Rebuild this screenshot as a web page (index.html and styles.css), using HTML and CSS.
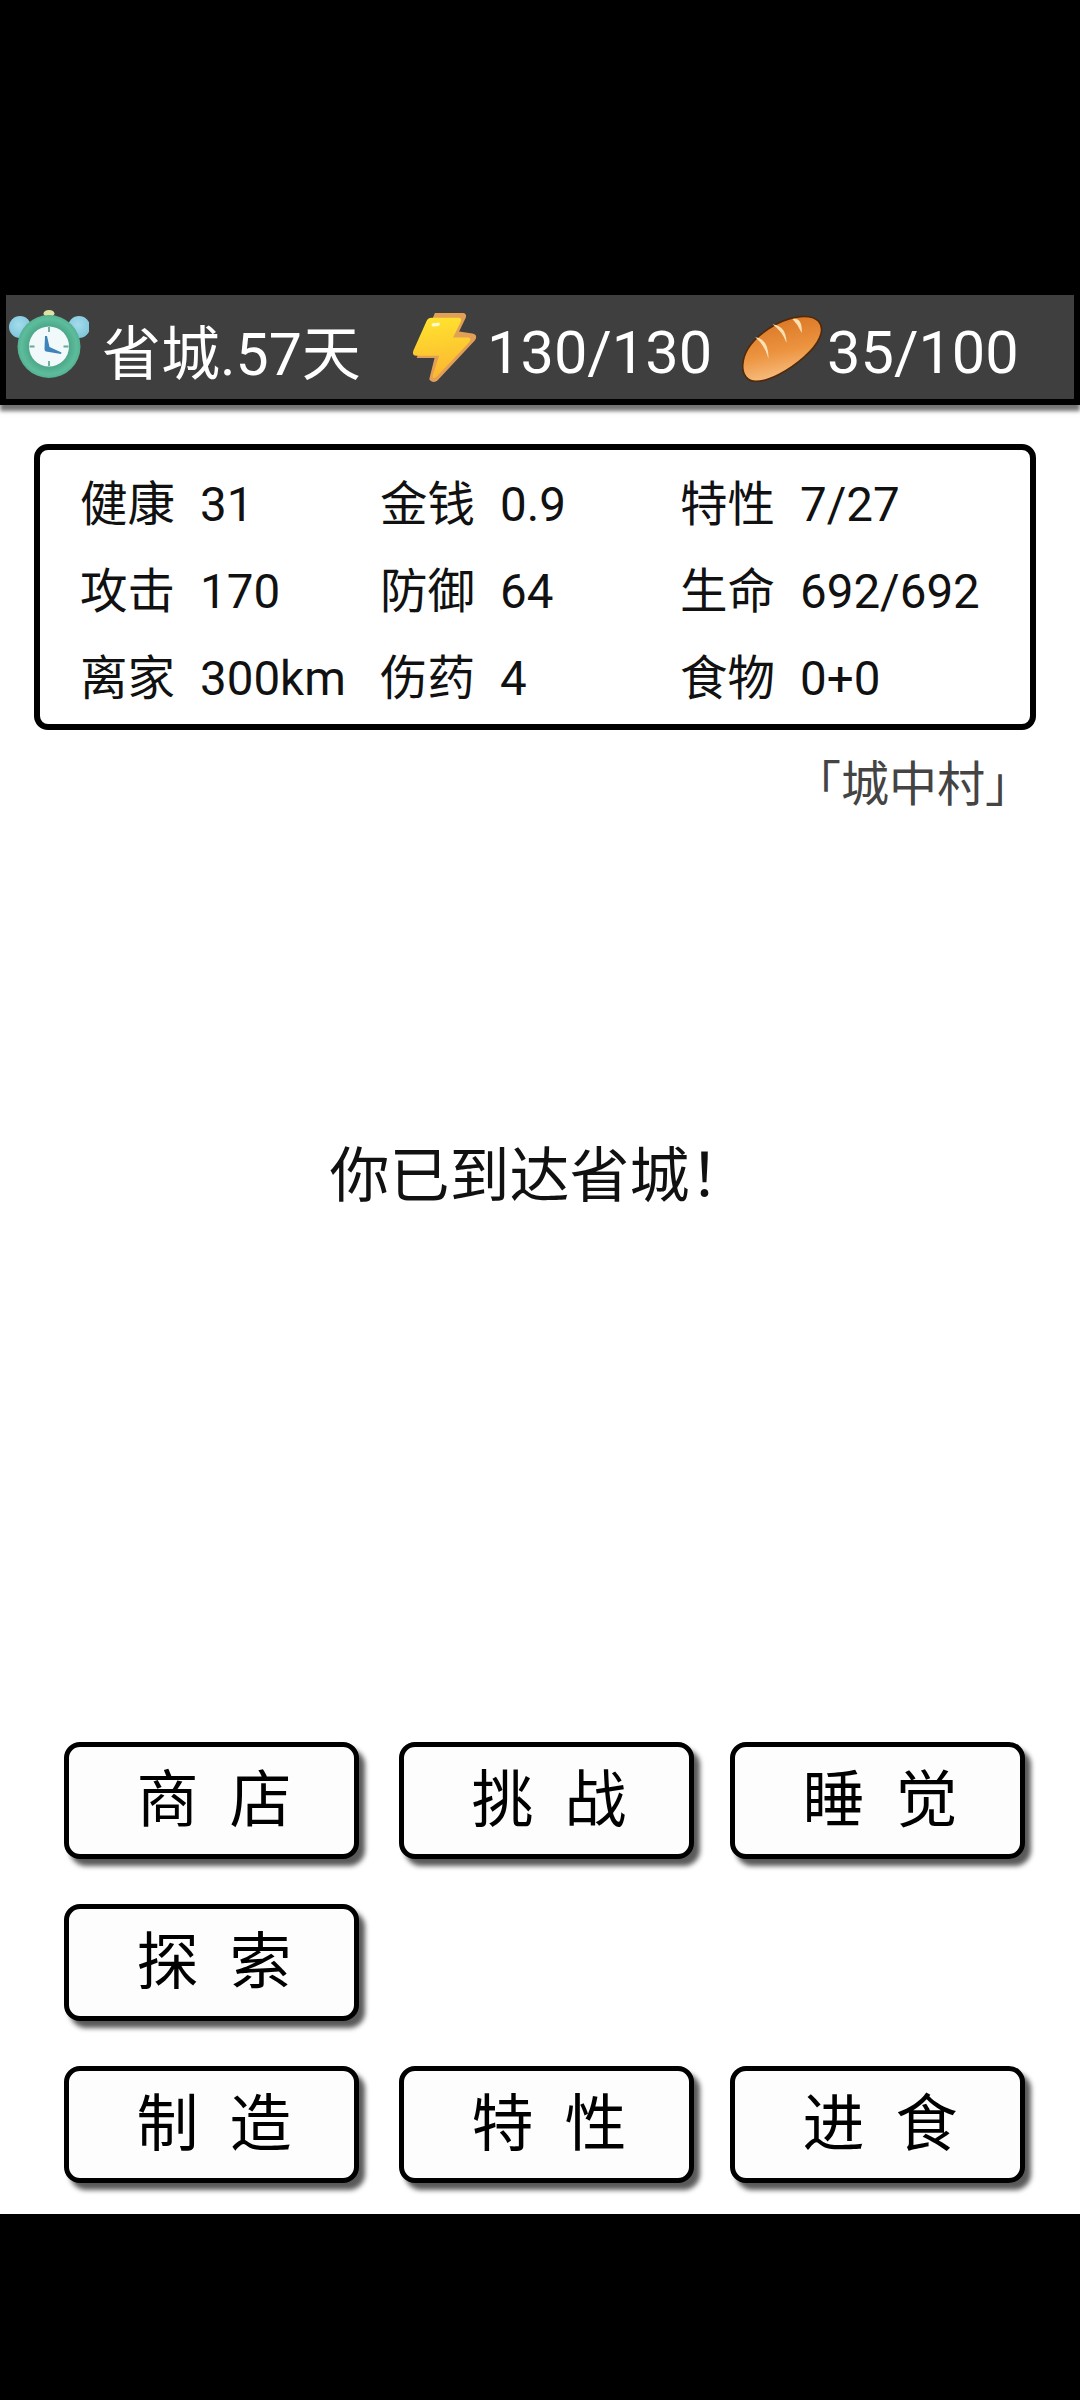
FILE: index.html
```html
<!DOCTYPE html>
<html lang="zh-CN">
<head>
<meta charset="utf-8">
<title>省城</title>
<link rel="stylesheet" href="styles.css">
</head>
<body>
<div class="top-black"></div>
<header class="status-wrap">
  <div class="status">
    <svg class="icon icon-clock" viewBox="0 0 80 68">
      <defs>
        <radialGradient id="bell" cx="0.45" cy="0.4" r="0.65"><stop offset="0" stop-color="#a4dcec"/><stop offset="1" stop-color="#7cc4da"/></radialGradient>
        <radialGradient id="body" cx="0.5" cy="0.5" r="0.55"><stop offset="0.6" stop-color="#4fa98c"/><stop offset="0.8" stop-color="#5cbd9b"/><stop offset="1" stop-color="#4da889"/></radialGradient>
      </defs>
      <ellipse cx="40" cy="3.5" rx="5.5" ry="3.5" fill="#dfe3a0"/>
      <circle cx="11" cy="17" r="11" fill="url(#bell)"/>
      <circle cx="70" cy="17" r="11" fill="url(#bell)"/>
      <circle cx="40" cy="36.5" r="31.5" fill="url(#body)"/>
      <circle cx="40" cy="36.5" r="20" fill="#f1f9fa"/>
      <path d="M40 17V22M40 51V56M20.500 36.500H25.500M54.500 36.500H59.500" stroke="#6aa896" stroke-width="1.8"/>
      <path d="M36 26L38 26L40.500 37L52.500 42.500L52 44L37 41.500Q35.500 41 35.500 39Z" fill="#3f84b8"/>
    </svg>
    <span class="loc">省城.57天</span>
    <svg class="icon icon-bolt" viewBox="30 30 205 220">
      <defs>
        <linearGradient id="boltfill" x1="0.4" y1="0" x2="0.55" y2="1"><stop offset="0" stop-color="#ffe22e"/><stop offset="1" stop-color="#fbb532"/></linearGradient>
      </defs>
      <path d="M105 36H190Q202 38 198 50L178 92L218 98Q236 102 226 118L112 240Q96 250 88 236L104 172H50Z" fill="#e2a056"/>
      <path d="M95 50H175Q188 50 183 62L160 110H205Q218 112 208 125L110 228Q98 238 98 225L118 165H50Q35 165 40 150L80 60Q85 50 95 50Z" fill="url(#boltfill)"/>
      <path d="M100 72L115 70" stroke="#fff8cf" stroke-width="10" stroke-linecap="round"/>
    </svg>
    <span class="energy">130/130</span>
    <svg class="icon icon-bread" viewBox="15 25 250 208">
      <defs>
        <linearGradient id="crust" x1="0.4" y1="0.1" x2="0.6" y2="0.9"><stop offset="0" stop-color="#dd7a28"/><stop offset="0.55" stop-color="#ec9440"/><stop offset="1" stop-color="#f7bb7c"/></linearGradient>
      </defs>
      <path d="M20 180C22 130 60 90 120 56C170 30 225 24 248 46C272 72 250 116 205 155C160 195 100 228 60 228C35 228 19 210 20 180Z" fill="url(#crust)" stroke="#4f2a0c" stroke-width="5"/>
      <path d="M58 95Q98 100 98 160Q88 120 58 95ZM110 56Q152 62 152 112Q140 78 110 56ZM170 40Q200 34 198 82Q188 58 170 40Z" fill="#fbe2b4"/>
    </svg>
    <span class="food">35/100</span>
  </div>
</header>

<main class="sheet">
  <section class="stats">
    <div class="stat"><span class="key">健康</span><span>31</span></div>
    <div class="stat"><span class="key">金钱</span><span>0.9</span></div>
    <div class="stat"><span class="key">特性</span><span>7/27</span></div>
    <div class="stat"><span class="key">攻击</span><span>170</span></div>
    <div class="stat"><span class="key">防御</span><span>64</span></div>
    <div class="stat"><span class="key">生命</span><span>692/692</span></div>
    <div class="stat"><span class="key">离家</span><span>300km</span></div>
    <div class="stat"><span class="key">伤药</span><span>4</span></div>
    <div class="stat"><span class="key">食物</span><span>0+0</span></div>
  </section>
  <p class="place">「城中村」</p>
  <p class="message">你已到达省城！</p>
  <nav class="actions">
    <button class="btn"><span>商</span><span>店</span></button>
    <button class="btn"><span>挑</span><span>战</span></button>
    <button class="btn"><span>睡</span><span>觉</span></button>
    <button class="btn"><span>探</span><span>索</span></button>
    <span class="slot"></span>
    <span class="slot"></span>
    <button class="btn"><span>制</span><span>造</span></button>
    <button class="btn"><span>特</span><span>性</span></button>
    <button class="btn"><span>进</span><span>食</span></button>
  </nav>
</main>
<div class="bottom-black"></div>
</body>
</html>
```

FILE: styles.css
```css
* { box-sizing: border-box; }
html, body { margin: 0; padding: 0; }
body {
  width: 1080px;
  height: 2400px;
  background: #000;
  display: flex;
  flex-direction: column;
  overflow: hidden;
  font-family: Roboto, "Noto Sans CJK SC", sans-serif;
}
.top-black { height: 295px; background: #000; flex: none; }
.status-wrap {
  flex: none;
  position: relative;
  z-index: 1;
  background: #000;
  padding: 0 6px 6px;
  box-shadow: 0 6px 4px rgba(0,0,0,.55);
}
.status {
  height: 104px;
  padding-top: 14px;
  background: #3f3f3f;
  color: #fff;
  font-size: 59.5px;
  display: flex;
  align-items: center;
  line-height: 1;
}
.icon { flex: none; display: block; }
.icon-clock { width: 80px; height: 68px; margin: -20px 0 0 3px; }
.loc { margin-left: 13px; width: 301px; flex: none; white-space: nowrap; font-size: 59px; }
.icon-bolt { width: 68px; height: 73px; margin: -14px 0 0 7px; }
.energy { margin-left: 9px; width: 253px; flex: none; }
.icon-bread { width: 83px; height: 69px; margin: -12px 0 0 1px; }
.food { margin-left: 3px; }

.sheet {
  height: 1809px;
  flex: none;
  background: #fff;
  color: #000;
  display: flex;
  flex-direction: column;
}
.stats {
  margin: 39px 44px 0 34px;
  height: 286px;
  border: 6px solid #000;
  border-radius: 14px;
  padding: 12px 0 0 40px;
  display: grid;
  grid-template-columns: 300px 300px 1fr;
  grid-auto-rows: 87px;
  font-size: 47.5px;
  line-height: 87px;
  color: #111;
}
.stat { display: flex; white-space: nowrap; }
.key { width: 120px; flex: none; }
.place {
  margin: 20px 47px 0 0;
  text-align: right;
  font-size: 48px;
  line-height: 70px;
  color: #444;
}
.message {
  margin: 0;
  flex: 1;
  display: flex;
  align-items: center;
  justify-content: center;
  font-size: 60px;
  color: #111;
  padding: 0 1px 222px 0;
}
.actions {
  display: grid;
  grid-template-columns: 335px 331px 295px;
  grid-auto-rows: 117px;
  row-gap: 45px;
  margin: 0 0 31px 64px;
}
.btn {
  width: 295px;
  margin: 0;
  padding: 0 0 12px 5px;
  background: #fdfdfd;
  border: 5px solid #000;
  border-radius: 16px;
  box-shadow: 6px 7px 5px rgba(0,0,0,.65);
  color: #000;
  font: inherit;
  font-size: 62px;
  display: flex;
  align-items: center;
  justify-content: center;
  gap: 31px;
}
.slot { display: block; }
.bottom-black { flex: 1; background: #000; }
```
